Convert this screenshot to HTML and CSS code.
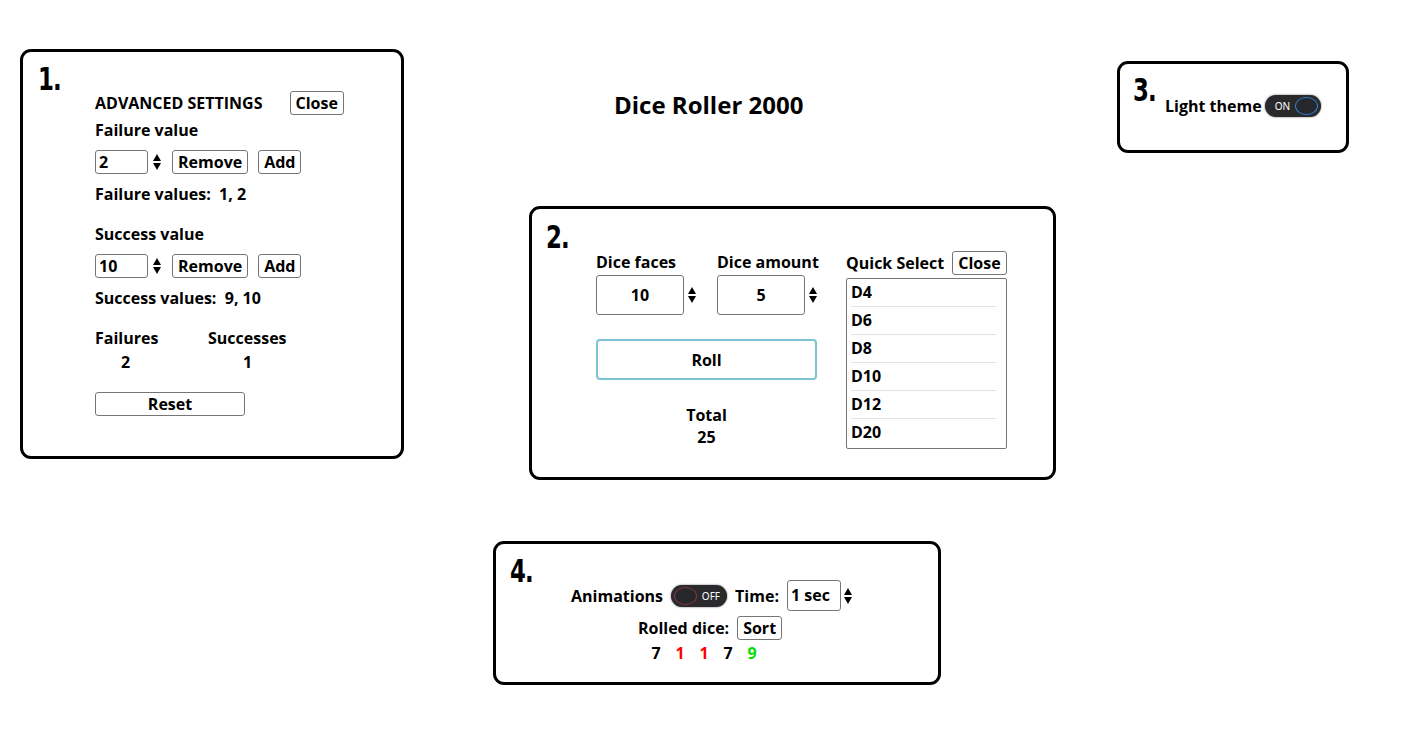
FILE: index.html
```html
<!DOCTYPE html>
<html lang="en">
<head>
  <meta charset="UTF-8" />
  <meta name="viewport" content="width=device-width, initial-scale=1.0"/>
  <title>Dice Roller 2000</title>
  <link rel="stylesheet" href="styles.css">
</head>
<body>
  <div class="board">
    <div class="top">
      <!-- 1. advanced settings -->
      <div class="panel p1">
        <div class="num">1.</div>
        <div class="adv">
          <div class="adv-head">
            <span>ADVANCED SETTINGS</span>
            <button class="btn">Close</button>
          </div>
          <div class="lbl">Failure value</div>
          <div class="row">
            <input class="field small" type="text" value="2">
            <span class="spin"><i class="up"></i><i class="down"></i></span>
            <button class="btn">Remove</button>
            <button class="btn">Add</button>
          </div>
          <div class="lbl">Failure values:&nbsp; 1, 2</div>

          <div class="lbl gap">Success value</div>
          <div class="row">
            <input class="field small" type="text" value="10">
            <span class="spin"><i class="up"></i><i class="down"></i></span>
            <button class="btn">Remove</button>
            <button class="btn">Add</button>
          </div>
          <div class="lbl">Success values:&nbsp; 9, 10</div>

          <div class="counts">
            <div class="count"><div>Failures</div><div class="cv">2</div></div>
            <div class="count"><div>Successes</div><div class="cv">1</div></div>
          </div>
          <button class="btn reset">Reset</button>
        </div>
      </div>

      <div class="middle">
        <h1 class="title">Dice Roller 2000</h1>

        <!-- 2. roller -->
        <div class="panel p2">
          <div class="num">2.</div>
          <div class="roller">
            <div class="main">
              <div class="inputs">
                <div class="group">
                  <div class="lbl">Dice faces</div>
                  <div class="with-spin">
                    <input class="field big" type="text" value="10">
                    <span class="spin"><i class="up"></i><i class="down"></i></span>
                  </div>
                </div>
                <div class="group">
                  <div class="lbl">Dice amount</div>
                  <div class="with-spin">
                    <input class="field big" type="text" value="5">
                    <span class="spin"><i class="up"></i><i class="down"></i></span>
                  </div>
                </div>
              </div>
              <button class="btn roll">Roll</button>
              <div class="total">
                <div>Total</div>
                <div>25</div>
              </div>
            </div>
            <div class="quick">
              <div class="quick-head">
                <span>Quick Select</span>
                <button class="btn">Close</button>
              </div>
              <div class="list">
                <div class="item">D4</div>
                <div class="item">D6</div>
                <div class="item">D8</div>
                <div class="item">D10</div>
                <div class="item">D12</div>
                <div class="item">D20</div>
              </div>
            </div>
          </div>
        </div>
      </div>

      <!-- 3. theme -->
      <div class="panel p3">
        <div class="num">3.</div>
        <div class="theme">
          <span>Light theme</span>
          <span class="toggle on"><span class="tx">ON</span><span class="knob"></span></span>
        </div>
      </div>
    </div>

    <!-- 4. animations -->
    <div class="panel p4">
      <div class="num">4.</div>
      <div class="anim">
        <div class="anim-row first">
          <span>Animations</span>
          <span class="toggle off"><span class="knob"></span><span class="tx">OFF</span></span>
          <span>Time:</span>
          <span class="select">1 sec</span>
          <span class="spin"><i class="up"></i><i class="down"></i></span>
        </div>
        <div class="anim-row second">
          <span>Rolled dice:</span>
          <button class="btn">Sort</button>
        </div>
        <div class="dice">
          <span>7</span>
          <span class="fail">1</span>
          <span class="fail">1</span>
          <span>7</span>
          <span class="success">9</span>
        </div>
      </div>
    </div>
  </div>
</body>
</html>
```

FILE: styles.css
```css
body {
  margin: 0;
  background-color: #fff;
  color: #000;
  font-family: "Open Sans", Lato, sans-serif;
  font-weight: 700;
  font-size: 16px;
}
.board {
  padding: 49px 0 0 20px;
}
.top {
  display: flex;
  align-items: flex-start;
}
.panel {
  box-sizing: border-box;
  border: 3px solid #000;
  border-radius: 11px;
  background: #fff;
}
.num {
  font-family: "Liberation Sans Narrow", "DejaVu Sans Condensed", sans-serif;
  font-weight: 700;
  font-size: 31px;
  line-height: 1;
  transform: scale(0.82, 1.02);
  transform-origin: left top;
  letter-spacing: -1px;
}

.btn {
  font-family: inherit;
  font-weight: 700;
  font-size: 16px;
  background: #fff;
  color: #000;
  border: 1px solid #767676;
  border-radius: 3px;
  height: 24px;
  padding: 0 5px;
  line-height: 20px;
}
.field {
  font-family: inherit;
  font-weight: 700;
  font-size: 16px;
  box-sizing: border-box;
  border: 1px solid #767676;
  border-radius: 3px;
  outline: none;
  color: #000;
}
.spin {
  display: inline-flex;
  flex-direction: column;
  gap: 2px;
  width: 9px;
}
.spin i {
  width: 0;
  height: 0;
  border-left: 4.5px solid transparent;
  border-right: 4.5px solid transparent;
}
.spin .up { border-bottom: 7px solid #000; }
.spin .down { border-top: 7px solid #000; }

/* 1 */
.p1 {
  width: 384px;
  height: 410px;
  padding: 11px 0 0 15px;
}
.adv {
  margin: -3px 0 0 57px;
}
.adv-head {
  display: flex;
  align-items: center;
  gap: 27px;
}
.lbl {
  line-height: 22px;
}
.adv .lbl {
  margin-top: 4px;
}
.adv .gap {
  margin-top: 18px;
}
.row {
  display: flex;
  align-items: center;
  gap: 10px;
  margin: 9px 0 9px;
}
.row .spin {
  margin-left: -5px;
}
.field.small {
  width: 53px;
  height: 24px;
  padding: 0 3px;
}
.counts {
  display: flex;
  margin-top: 17px;
}
.count {
  width: 113px;
  line-height: 24px;
}
.count:first-child .cv { padding-left: 26px; }
.count:last-child .cv { padding-left: 35px; }
.reset {
  width: 150px;
  margin-top: 18px;
}

/* title + 2 */
.middle {
  margin-left: 125px;
}
.title {
  font-size: 24px;
  font-weight: 700;
  margin: 41px 0 0 85px;
  line-height: 30px;
}
.p2 {
  width: 527px;
  height: 274px;
  margin-top: 86px;
  padding: 12px 0 0 14px;
}
.roller {
  display: flex;
  margin: -5px 0 0 50px;
}
.main {
  width: 250px;
}
.inputs {
  display: flex;
  gap: 20px;
}
.group .lbl {
  margin-top: 4px;
}
.with-spin {
  display: flex;
  align-items: center;
  gap: 4px;
  margin-top: 2px;
}
.field.big {
  width: 88px;
  height: 40px;
  text-align: center;
}
.roll {
  display: block;
  width: 221px;
  height: 41px;
  margin-top: 24px;
  border: 2px solid #7cc4d2;
  border-radius: 4px;
}
.total {
  width: 221px;
  text-align: center;
  line-height: 22px;
  margin-top: 24px;
}
.quick-head {
  display: flex;
  align-items: center;
  gap: 8px;
  margin-top: 4px;
}
.list {
  box-sizing: border-box;
  width: 161px;
  height: 171px;
  margin-top: 3px;
  border: 1px solid #767676;
  border-radius: 2px;
  padding: 0 10px 0 4px;
}
.item {
  height: 28px;
  line-height: 27px;
  border-bottom: 1px solid #e3e3e3;
  box-sizing: border-box;
}
.item:last-child {
  border-bottom: none;
}

/* 3 */
.p3 {
  width: 232px;
  height: 92px;
  margin: 12px 0 0 61px;
  padding: 10px 0 0 13px;
}
.theme {
  display: flex;
  align-items: center;
  gap: 3px;
  margin: -10px 0 0 32px;
}
.toggle {
  display: inline-flex;
  align-items: center;
  justify-content: space-between;
  box-sizing: border-box;
  background: #2a2a2c;
  border-radius: 12px;
  padding: 0 3px 0 7px;
  box-shadow: 0 0 2px #555;
  font-family: "Noto Sans", sans-serif;
  font-weight: 400;
  font-size: 10px;
  color: #fff;
}
.toggle .knob {
  box-sizing: border-box;
  width: 23px;
  height: 18px;
  border-radius: 50%;
  background: #26272b;
}
.toggle.on {
  width: 56px;
  height: 22px;
  padding-left: 10px;
}
.toggle.on .knob {
  border: 1.5px solid #2f7fd8;
}
.toggle.off {
  width: 56px;
  height: 22px;
  padding: 0 7px 0 3px;
}
.toggle.off .knob {
  border: 1.5px solid #8c3246;
}

/* 4 */
.p4 {
  width: 448px;
  height: 144px;
  margin: 61px 0 0 473px;
  padding: 11px 0 0 14px;
}
.anim {
  margin: -6px 0 0 -14px;
  display: flex;
  flex-direction: column;
  align-items: center;
}
.anim-row {
  display: flex;
  align-items: center;
  gap: 8px;
}
.anim-row.first {
  margin-left: -10px;
}
.anim-row.second {
  margin: 5px 0 0 -14px;
}
.select {
  box-sizing: border-box;
  border: 1px solid #767676;
  border-radius: 3px;
  height: 31px;
  width: 54px;
  padding: 0 3px;
  line-height: 29px;
}
.anim-row .spin {
  margin-left: -5px;
}
.dice {
  display: flex;
  gap: 14px;
  margin: 2px 0 0 -26px;
}
.dice span {
  width: 10px;
  text-align: center;
}
.fail { color: #f00; }
.success { color: #0d0; }
```
